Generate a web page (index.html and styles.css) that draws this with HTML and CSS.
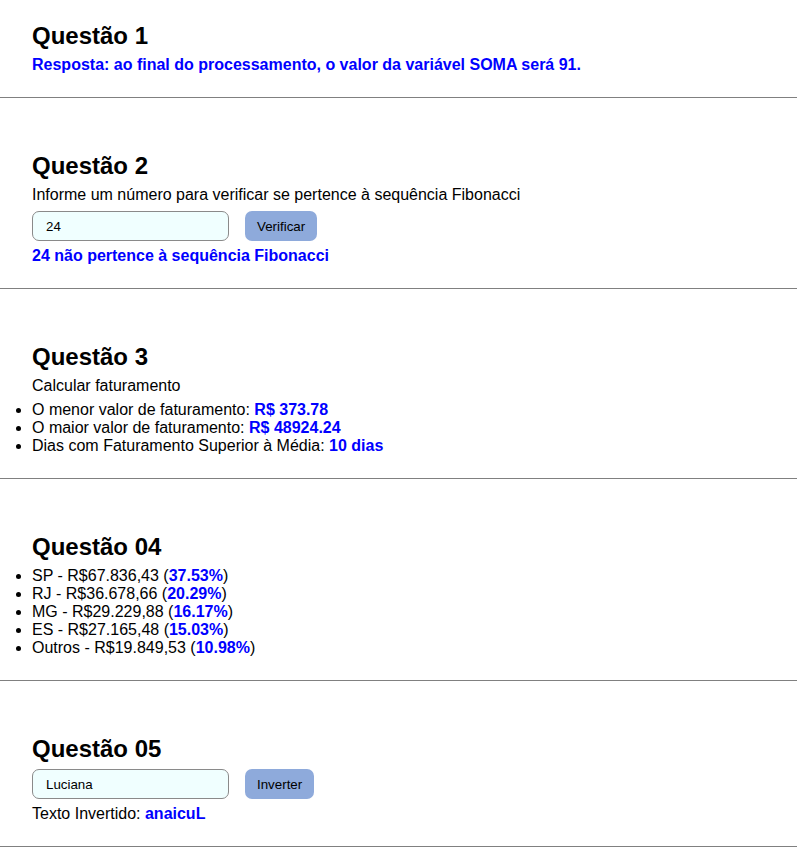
FILE: index.html
```html
<!DOCTYPE html>
<html lang="pt-BR">
<head>
<meta charset="utf-8">
<title>Questões</title>
<link rel="stylesheet" href="styles.css">
</head>
<body>
<section class="section">
  <h2 class="title">Questão 1</h2>
  <p class="answer">Resposta: ao final do processamento, o valor da variável SOMA será 91.</p>
</section>
<hr class="divider">
<section class="section">
  <h2 class="title">Questão 2</h2>
  <p class="text text--lead">Informe um número para verificar se pertence à sequência Fibonacci</p>
  <div class="form-row">
    <input class="field" type="text" value="24">
    <button class="btn" type="button">Verificar</button>
  </div>
  <p class="answer">24 não pertence à sequência Fibonacci</p>
</section>
<hr class="divider">
<section class="section">
  <h2 class="title">Questão 3</h2>
  <p class="text">Calcular faturamento</p>
  <ul class="list">
    <li>O menor valor de faturamento: <strong class="hl">R$ 373.78</strong></li>
    <li>O maior valor de faturamento: <strong class="hl">R$ 48924.24</strong></li>
    <li>Dias com Faturamento Superior à Média: <strong class="hl">10 dias</strong></li>
  </ul>
</section>
<hr class="divider">
<section class="section">
  <h2 class="title">Questão 04</h2>
  <ul class="list">
    <li>SP - R$67.836,43 (<strong class="hl">37.53%</strong>)</li>
    <li>RJ - R$36.678,66 (<strong class="hl">20.29%</strong>)</li>
    <li>MG - R$29.229,88 (<strong class="hl">16.17%</strong>)</li>
    <li>ES - R$27.165,48 (<strong class="hl">15.03%</strong>)</li>
    <li>Outros - R$19.849,53 (<strong class="hl">10.98%</strong>)</li>
  </ul>
</section>
<hr class="divider">
<section class="section">
  <h2 class="title">Questão 05</h2>
  <div class="form-row">
    <input class="field" type="text" value="Luciana">
    <button class="btn" type="button">Inverter</button>
  </div>
  <p class="text">Texto Invertido: <strong class="hl">anaicuL</strong></p>
</section>
<hr class="divider">
</body>
</html>
```

FILE: styles.css
```css
html, body {
  margin: 0;
  padding: 0;
  background: #fff;
}
body {
  font-family: "Liberation Sans", Arial, sans-serif;
  font-size: 16px;
  line-height: 18px;
  color: #000;
}
.section {
  display: flex;
  flex-direction: column;
  gap: 6px;
  padding: 22px 32px 23px;
}
.title {
  margin: 0;
  font-size: 24px;
  line-height: 28px;
  font-weight: bold;
}
.text {
  margin: 0;
}
.text--lead {
  margin-bottom: 1px;
}
.answer {
  margin: 0;
  font-weight: bold;
  color: #0000ff;
}
.hl {
  color: #0000ff;
  font-weight: bold;
}
.list {
  margin: 0;
  padding: 0;
  list-style: disc outside;
}
.form-row {
  display: flex;
  align-items: center;
  gap: 16px;
}
.field {
  box-sizing: border-box;
  width: 197px;
  height: 30px;
  margin: 0;
  padding: 0 13px;
  border: 1px solid #8a8a8a;
  border-radius: 7px;
  background: #f0ffff;
  font-family: "Liberation Sans", Arial, sans-serif;
  font-size: 13.333px;
  color: #000;
  outline: none;
}
.btn {
  box-sizing: border-box;
  height: 30px;
  margin: 0;
  padding: 0 12px;
  border: none;
  border-radius: 7px;
  background: #8eaadb;
  font-family: "Liberation Sans", Arial, sans-serif;
  font-size: 13.333px;
  color: #000;
  cursor: pointer;
}
.divider {
  margin: 0 0 32px;
  border: none;
  border-top: 1px solid #808080;
  height: 0;
}
```
